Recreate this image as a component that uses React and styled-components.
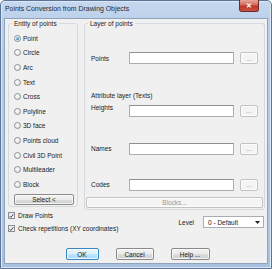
import React from "react";
import styled, { createGlobalStyle } from "styled-components";

const Global = createGlobalStyle`
  html, body { margin: 0; padding: 0; background: #fff; }
  body { font-family: "Liberation Sans", Arial, sans-serif; }
  * { box-sizing: border-box; }
`;

const Window = styled.div`
  width: 272px;
  height: 269px;
  display: flex;
  flex-direction: column;
  background: linear-gradient(180deg, #c6d8ef 0%, #b9cde8 10%, #a9c1e0 100%);
  border: 1px solid #5a7397;
  border-radius: 5px 5px 0 0;
  padding: 0 3px 4px 3px;
  box-shadow: inset 0 0 0 1px #dde8f5;
`;

const TitleBar = styled.div`
  height: 17px;
  display: flex;
  align-items: flex-start;
  position: relative;
`;

const Title = styled.span`
  font-size: 6.9px;
  color: #1e2a3a;
  margin: 4px 0 0 1px;
  white-space: nowrap;
`;

const CloseButton = styled.div`
  position: absolute;
  right: 9px;
  top: -1px;
  width: 20px;
  height: 12px;
  border: 1px solid #6b2b2b;
  border-top: none;
  border-radius: 0 0 3px 3px;
  background: linear-gradient(180deg, #e8a598 0%, #d26a5a 45%, #b9372a 55%, #d0503e 100%);
  display: flex;
  align-items: center;
  justify-content: center;
  color: #fff;
  font-size: 7px;
  font-weight: bold;
`;

const Client = styled.div`
  flex: 1;
  background: #f0f0f0;
  border: 1px solid #8fa3bd;
  display: flex;
  flex-direction: column;
  padding: 0 2px 0 3px;
  font-size: 6.5px;
  color: #1a1a1a;
`;

const MainRow = styled.div`
  display: flex;
  gap: 6px;
  align-items: flex-start;
`;

const Group = styled.fieldset`
  margin: 0;
  border: 1px solid #d5dadf;
  border-radius: 3px;
  padding: 0;
  width: ${(p) => p.$w || "auto"};
  height: ${(p) => p.$h || "auto"};
  min-width: 0;
  flex: ${(p) => (p.$grow ? 1 : "none")};
`;

const Legend = styled.legend`
  font-size: 6.5px;
  padding: 0 2px;
  margin-left: 3px;
  line-height: 9px;
  height: 9px;
  color: #1a1a1a;
`;

const RadioList = styled.div`
  display: flex;
  flex-direction: column;
  padding-top: 3px;
`;

const RadioRow = styled.label`
  height: 14.6px;
  display: flex;
  align-items: center;
  gap: 2px;
  padding-left: 5px;
  font-size: 6.5px;
  white-space: nowrap;
`;

const RadioDot = styled.span`
  width: 7px;
  height: 7px;
  border-radius: 50%;
  border: 1px solid #8e8f8f;
  background: radial-gradient(circle at 40% 35%, #ffffff 0%, #e4e4e4 70%, #cfcfcf 100%);
  display: flex;
  align-items: center;
  justify-content: center;
  flex: none;
  &::after {
    content: "";
    width: 3px;
    height: 3px;
    border-radius: 50%;
    background: ${(p) => (p.$on ? "radial-gradient(circle at 35% 35%, #8ad0f7, #1a5b9a)" : "transparent")};
  }
`;

const Button = styled.div`
  height: ${(p) => p.$h || "11px"};
  width: ${(p) => p.$w || "auto"};
  border: 1px solid ${(p) => (p.$default ? "#3a86c0" : p.$disabled ? "#c2c2c2" : "#8a8a8a")};
  border-radius: 2px;
  background: ${(p) =>
    p.$disabled
      ? "#f4f4f4"
      : p.$default
      ? "linear-gradient(180deg, #eaf6fd 0%, #d9f0fc 50%, #bee6fd 51%, #a7d9f5 100%)"
      : "linear-gradient(180deg, #f2f2f2 0%, #ebebeb 50%, #dddddd 51%, #cfcfcf 100%)"};
  box-shadow: inset 0 0 0 1px rgba(255, 255, 255, 0.7);
  display: flex;
  align-items: center;
  justify-content: center;
  font-size: 6.5px;
  color: ${(p) => (p.$disabled ? "#9a9a9a" : "#1a1a1a")};
  flex: none;
`;

const SelectWrap = styled.div`
  padding: 2px 3px 0 5px;
`;

const FieldRow = styled.div`
  display: flex;
  align-items: center;
  height: 12px;
  margin-top: ${(p) => p.$mt || "0"};
`;

const FieldLabel = styled.span`
  width: 44px;
  padding-left: 6px;
  font-size: 6.5px;
  flex: none;
  position: relative;
  top: ${(p) => p.$dy || "0"};
`;

const TextInput = styled.div`
  width: 105px;
  height: 12px;
  background: #fff;
  border: 1px solid #abadb3;
  border-top-color: #8e9096;
  margin-right: 6px;
  flex: none;
`;

const SubTitle = styled.div`
  font-size: 6.5px;
  line-height: 7.5px;
  padding-left: 6px;
  margin-top: ${(p) => p.$mt || "0"};
`;

const BlocksWrap = styled.div`
  padding: 6px 1px 0 1px;
`;

const LowerRow = styled.div`
  display: flex;
  align-items: center;
  margin-top: 1px;
`;

const Checks = styled.div`
  display: flex;
  flex-direction: column;
  gap: 4px;
  flex: 1;
`;

const CheckRow = styled.label`
  display: flex;
  align-items: center;
  gap: 3px;
  font-size: 6.5px;
  white-space: nowrap;
  height: 9px;
`;

const CheckBox = styled.span`
  width: 7px;
  height: 7px;
  border: 1px solid #8e8f8f;
  background: linear-gradient(135deg, #e6e6e6, #fbfbfb);
  display: flex;
  align-items: center;
  justify-content: center;
  flex: none;
`;

const LevelLabel = styled.span`
  font-size: 6.5px;
  margin-right: 9px;
`;

const Dropdown = styled.div`
  width: 61px;
  height: 12px;
  background: #fff;
  border: 1px solid #abadb3;
  display: flex;
  align-items: center;
  justify-content: space-between;
  padding: 0 3px 0 4px;
  font-size: 6.5px;
  margin-right: 1px;
`;

const ButtonRow = styled.div`
  display: flex;
  justify-content: center;
  gap: 17px;
  margin-top: 15px;
  padding-left: 2px;
`;

const radios = [
  "Point",
  "Circle",
  "Arc",
  "Text",
  "Cross",
  "Polyline",
  "3D face",
  "Points cloud",
  "Civil 3D Point",
  "Multileader",
  "Block",
];

const Check = () => (
  <svg width="6" height="6" viewBox="0 0 6 6">
    <path d="M0.8 3.2 L2.3 4.8 L5.3 0.8" fill="none" stroke="#2b4a7a" strokeWidth="1.2" />
  </svg>
);

const Dots = () => (
  <Button $w="18px" $h="12px" $disabled>
    ...
  </Button>
);

export default function App() {
  return (
    <>
      <Global />
      <Window>
        <TitleBar>
          <Title>Points Conversion from Drawing Objects</Title>
          <CloseButton>✕</CloseButton>
        </TitleBar>
        <Client>
          <MainRow>
            <Group $w="70px" $h="188px">
              <Legend>Entity of points</Legend>
              <RadioList>
                {radios.map((r, i) => (
                  <RadioRow key={r}>
                    <RadioDot $on={i === 0} />
                    {r}
                  </RadioRow>
                ))}
              </RadioList>
              <SelectWrap>
                <Button $h="11px">Select &lt;</Button>
              </SelectWrap>
            </Group>
            <Group $grow $h="191px">
              <Legend>Layer of points</Legend>
              <FieldRow $mt="24px">
                <FieldLabel>Points</FieldLabel>
                <TextInput />
                <Dots />
              </FieldRow>
              <SubTitle $mt="28px">Attribute layer (Texts)</SubTitle>
              <FieldRow $mt="5px">
                <FieldLabel $dy="-3px">Heights</FieldLabel>
                <TextInput />
                <Dots />
              </FieldRow>
              <FieldRow $mt="26px">
                <FieldLabel>Names</FieldLabel>
                <TextInput />
                <Dots />
              </FieldRow>
              <FieldRow $mt="24px">
                <FieldLabel>Codes</FieldLabel>
                <TextInput />
                <Dots />
              </FieldRow>
              <BlocksWrap>
                <Button $h="11px" $disabled>
                  Blocks...
                </Button>
              </BlocksWrap>
            </Group>
          </MainRow>
          <LowerRow>
            <Checks>
              <CheckRow>
                <CheckBox>
                  <Check />
                </CheckBox>
                Draw Points
              </CheckRow>
              <CheckRow>
                <CheckBox>
                  <Check />
                </CheckBox>
                Check repetitions (XY coordinates)
              </CheckRow>
            </Checks>
            <LevelLabel>Level</LevelLabel>
            <Dropdown>
              <span>0 - Default</span>
              <svg width="5" height="3" viewBox="0 0 5 3">
                <path d="M0 0 L5 0 L2.5 3 Z" fill="#222" />
              </svg>
            </Dropdown>
          </LowerRow>
          <ButtonRow>
            <Button $w="33px" $h="12px" $default>
              OK
            </Button>
            <Button $w="38px" $h="12px">
              Cancel
            </Button>
            <Button $w="39px" $h="12px">
              Help ...
            </Button>
          </ButtonRow>
        </Client>
      </Window>
    </>
  );
}
